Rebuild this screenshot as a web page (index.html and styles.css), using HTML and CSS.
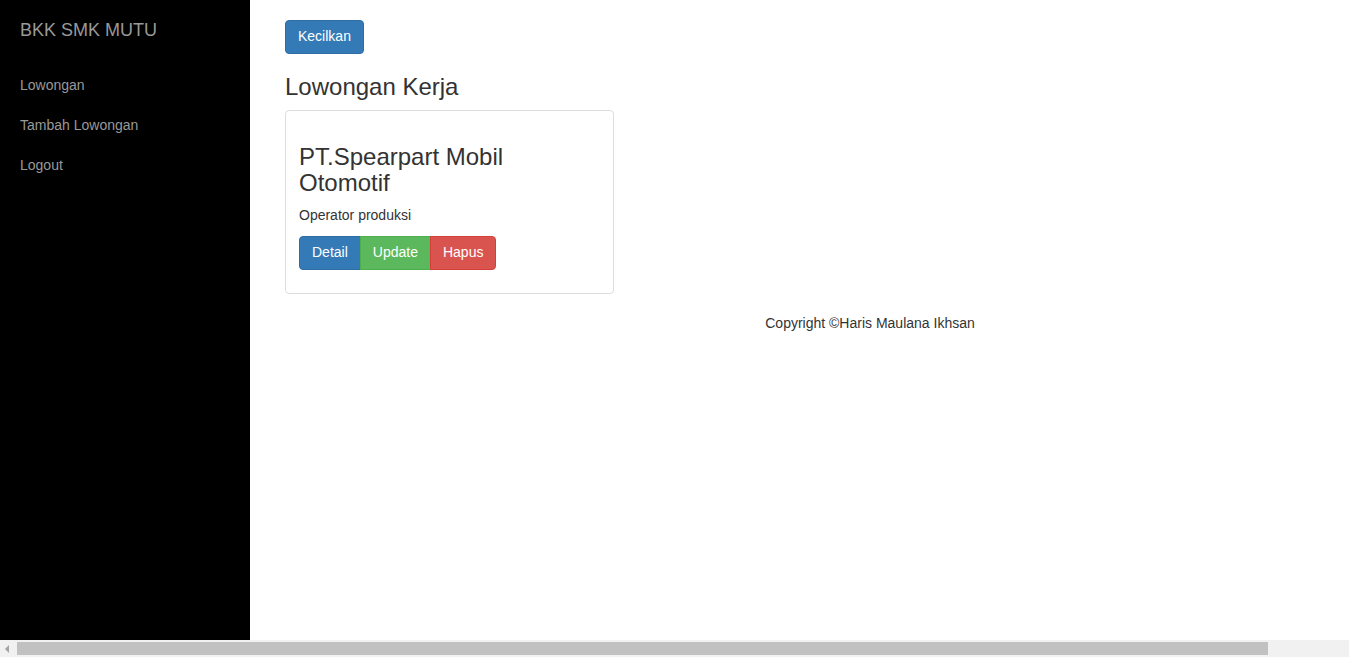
FILE: index.html
```html
<!DOCTYPE html>
<html lang="id">
<head>
<meta charset="utf-8">
<title>BKK SMK MUTU</title>
<link rel="stylesheet" href="styles.css">
</head>
<body>
<div class="page">
  <div class="wrapper">
    <nav class="sidebar">
      <ul class="sidebar-nav">
        <li class="sidebar-brand"><a href="#">BKK SMK MUTU</a></li>
        <li><a href="#">Lowongan</a></li>
        <li><a href="#">Tambah Lowongan</a></li>
        <li><a href="#">Logout</a></li>
      </ul>
    </nav>
    <main class="content">
      <div class="container">
        <button class="btn btn-primary">Kecilkan</button>
        <h3 class="title">Lowongan Kerja</h3>
        <div class="thumbnail">
          <div class="caption">
            <h3 class="company">PT.Spearpart Mobil Otomotif</h3>
            <p class="desc">Operator produksi</p>
            <p class="actions">
              <span class="btn-group">
                <a class="btn btn-primary" href="#">Detail</a><a class="btn btn-success" href="#">Update</a><a class="btn btn-danger" href="#">Hapus</a>
              </span>
            </p>
          </div>
        </div>
        <footer class="footer">Copyright ©Haris Maulana Ikhsan</footer>
      </div>
    </main>
  </div>
  <div class="hscroll">
    <span class="hscroll-arrow"></span>
    <span class="hscroll-thumb"></span>
  </div>
</div>
</body>
</html>
```

FILE: styles.css
```css
* { box-sizing: border-box; }
html, body { margin: 0; padding: 0; height: 100%; }
body {
  font-family: "Liberation Sans", Arial, Helvetica, sans-serif;
  font-size: 14px;
  line-height: 1.428571;
  color: #333;
  background: #fff;
  overflow: hidden;
}
.page {
  display: flex;
  flex-direction: column;
  height: 657px;
}
.wrapper {
  display: flex;
  flex: 1 1 auto;
  min-height: 0;
  overflow: hidden;
}
.sidebar {
  flex: 0 0 250px;
  width: 250px;
  background: #000;
}
.sidebar-nav {
  list-style: none;
  margin: 0;
  padding: 0;
}
.sidebar-nav li {
  line-height: 40px;
  text-indent: 20px;
}
.sidebar-nav li a {
  display: block;
  color: #999;
  text-decoration: none;
}
.sidebar-nav .sidebar-brand {
  height: 65px;
  font-size: 18px;
  line-height: 60px;
}
.content {
  flex: 1 1 auto;
  min-width: 0;
  padding: 20px 35px;
}
.container {
  width: 1170px;
}
.btn {
  display: inline-block;
  padding: 6px 12px;
  font-family: inherit;
  font-size: 14px;
  line-height: 1.428571;
  color: #fff;
  text-decoration: none;
  border: 1px solid transparent;
  border-radius: 4px;
  vertical-align: middle;
  cursor: pointer;
}
.btn-primary { background: #337ab7; border-color: #2e6da4; }
.btn-success { background: #5cb85c; border-color: #4cae4c; }
.btn-danger { background: #d9534f; border-color: #d43f3a; }
.title {
  margin: 20px 0 10px;
  font-size: 24px;
  font-weight: 500;
  line-height: 1.1;
}
.thumbnail {
  width: 329px;
  padding: 4px;
  margin-bottom: 20px;
  border: 1px solid #ddd;
  border-radius: 4px;
  background: #fff;
}
.caption {
  padding: 9px;
}
.company {
  margin: 20px 0 10px;
  font-size: 24px;
  font-weight: 500;
  line-height: 26px;
}
.desc { margin: 0 0 10px; }
.actions { margin: 0 0 10px; }
.btn-group {
  display: inline-flex;
  vertical-align: middle;
}
.btn-group .btn { border-radius: 0; }
.btn-group .btn + .btn { margin-left: -1px; }
.btn-group .btn:first-child { border-radius: 4px 0 0 4px; }
.btn-group .btn:last-child { border-radius: 0 4px 4px 0; }
.footer {
  text-align: center;
}
.hscroll {
  flex: 0 0 17px;
  display: flex;
  align-items: center;
  background: #f1f1f1;
}
.hscroll-arrow {
  flex: 0 0 17px;
  height: 17px;
  display: flex;
  align-items: center;
  justify-content: flex-start;
  padding-left: 5px;
}
.hscroll-arrow::before {
  content: "";
  width: 0;
  height: 0;
  border-top: 4px solid transparent;
  border-bottom: 4px solid transparent;
  border-right: 4px solid #a3a3a3;
}
.hscroll-thumb {
  width: 1251px;
  height: 13px;
  background: #c1c1c1;
}
```
